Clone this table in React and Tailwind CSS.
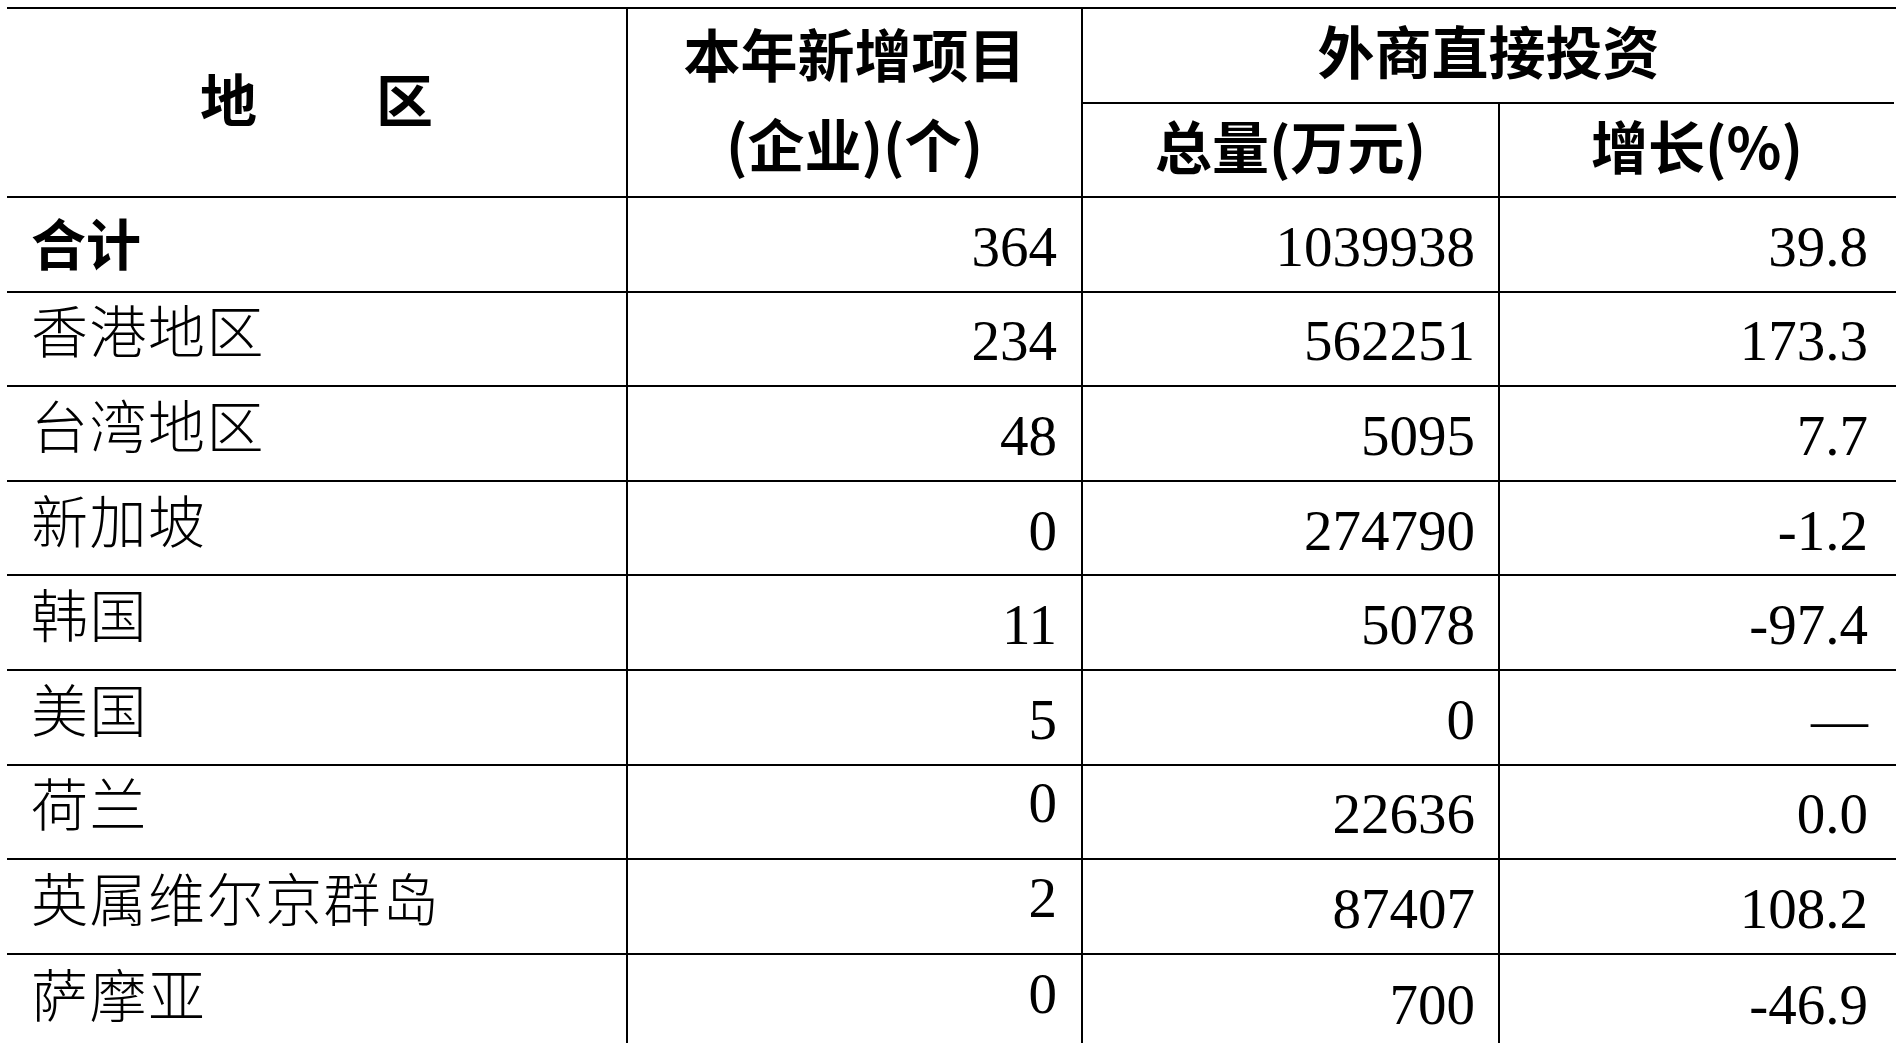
import React from "react";

const rows = [
  { name: "合计", a: "364", b: "1039938", c: "39.8", total: true },
  { name: "香港地区", a: "234", b: "562251", c: "173.3" },
  { name: "台湾地区", a: "48", b: "5095", c: "7.7" },
  { name: "新加坡", a: "0", b: "274790", c: "-1.2" },
  { name: "韩国", a: "11", b: "5078", c: "-97.4" },
  { name: "美国", a: "5", b: "0", c: "—" },
  { name: "荷兰", a: "0", b: "22636", c: "0.0", up: true },
  { name: "英属维尔京群岛", a: "2", b: "87407", c: "108.2", up: true },
  { name: "萨摩亚", a: "0", b: "700", c: "-46.9", up: true, last: true },
];

const cjkHead = { fontFamily: '"Noto Sans CJK SC", "Noto Sans", sans-serif' };
const num = { fontFamily: '"Liberation Serif", "Times New Roman", serif' };

export default function App() {
  return (
    <div className="w-[1896px] h-[1043px] overflow-hidden bg-white text-black pt-[7px] pl-[7px]">
      {/* header */}
      <div
        className="grid grid-cols-[619px_455px_417px_396px] grid-rows-[95px_92px] border-y-2 border-black text-[57px] font-bold leading-none"
        style={cjkHead}
      >
        <div className="row-span-2 flex items-center justify-center gap-[119px] pb-[10px]">
          <span>地</span>
          <span>区</span>
        </div>
        <div className="row-span-2 border-l-2 border-black flex flex-col items-center justify-center leading-[90px] pb-[12px]">
          <span>本年新增项目</span>
          <span>(企业)(个)</span>
        </div>
        <div className="col-span-2 border-l-2 border-b-2 border-black flex items-center justify-center pb-[12px]">
          外商直接投资
        </div>
        <div className="border-l-2 border-black flex items-center justify-center pb-[12px]">总量(万元)</div>
        <div className="border-l-2 border-black flex items-center justify-center pb-[12px]">增长(%)</div>
      </div>

      {/* body */}
      {rows.map((r) => (
        <div
          key={r.name}
          className={
            "grid grid-cols-[619px_455px_417px_396px] h-[94.6px] " +
            (r.last ? "" : "border-b-2 border-black")
          }
        >
          <div
            className={
              "flex items-center pl-[24px] leading-none " +
              (r.total
                ? "text-[55px] font-bold pb-[6px]"
                : "text-[57px] font-light tracking-[1.5px] pb-[20px]")
            }
            style={cjkHead}
          >
            {r.name}
          </div>
          <div
            className={
              "border-l-2 border-black flex items-center justify-end pr-[24px] text-[57px] leading-none " +
              (r.up ? "pb-[18px]" : "pt-[4px]")
            }
            style={num}
          >
            {r.a}
          </div>
          <div
            className="border-l-2 border-black flex items-center justify-end pr-[23px] text-[57px] leading-none pt-[4px]"
            style={num}
          >
            {r.b}
          </div>
          <div
            className="border-l-2 border-black flex items-center justify-end pr-[26px] text-[57px] leading-none pt-[4px]"
            style={num}
          >
            {r.c}
          </div>
        </div>
      ))}
    </div>
  );
}
